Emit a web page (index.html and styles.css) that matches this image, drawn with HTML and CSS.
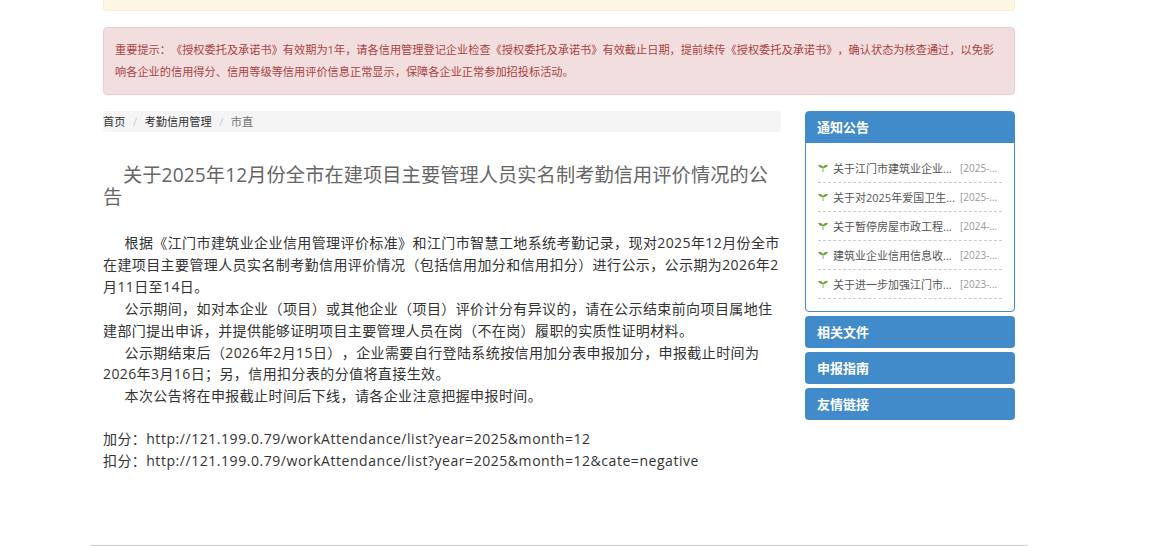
FILE: index.html
```html
<!DOCTYPE html>
<html lang="zh-CN">
<head>
    <meta charset="UTF-8">
    <title>关于2025年12月份全市在建项目主要管理人员实名制考勤信用评价情况的公告</title>
    <link rel="stylesheet" href="styles.css">
</head>
<body>
    <div class="container">
        <div class="alert alert-warning"></div>
        <div class="alert alert-danger">重要提示：《授权委托及承诺书》有效期为1年，请各信用管理登记企业检查《授权委托及承诺书》有效截止日期，提前续传《授权委托及承诺书》，确认状态为核查通过，以免影响各企业的信用得分、信用等级等信用评价信息正常显示，保障各企业正常参加招投标活动。</div>

        <div class="content">
            <div class="main">
                <ol class="breadcrumb">
                    <li><a href="#">首页</a></li>
                    <li><a href="#">考勤信用管理</a></li>
                    <li class="active">市直</li>
                </ol>
                <h3 class="title">关于2025年12月份全市在建项目主要管理人员实名制考勤信用评价情况的公告</h3>
                <div class="article">
                    <p class="indent">根据《江门市建筑业企业信用管理评价标准》和江门市智慧工地系统考勤记录，现对2025年12月份全市在建项目主要管理人员实名制考勤信用评价情况（包括信用加分和信用扣分）进行公示，公示期为2026年2月11日至14日。</p>
                    <p class="indent">公示期间，如对本企业（项目）或其他企业（项目）评价计分有异议的，请在公示结束前向项目属地住建部门提出申诉，并提供能够证明项目主要管理人员在岗（不在岗）履职的实质性证明材料。</p>
                    <p class="indent">公示期结束后（2026年2月15日），企业需要自行登陆系统按信用加分表申报加分，申报截止时间为2026年3月16日；另，信用扣分表的分值将直接生效。</p>
                    <p class="indent">本次公告将在申报截止时间后下线，请各企业注意把握申报时间。</p>
                    <p class="links">加分：<span class="url">http://121.199.0.79/workAttendance/list?year=2025&amp;month=12</span></p>
                    <p>扣分：<span class="url">http://121.199.0.79/workAttendance/list?year=2025&amp;month=12&amp;cate=negative</span></p>
                </div>
            </div>

            <div class="sidebar">
                <div class="panel">
                    <div class="panel-heading">通知公告</div>
                    <ul class="news">
                        <li>
                            <svg class="sprout" viewBox="0 0 10 10"><path d="M5 9V4.500M5 4.500C4 2.500 2 2 .5 2.500 1.500 4.200 3.500 5 5 4.500ZM5 4.500C6 2.500 8 2 9.500 2.500 8.500 4.200 6.500 5 5 4.500Z"/></svg>
                            <a href="#">关于江门市建筑业企业...</a><span class="date">[2025-...</span>
                        </li>
                        <li>
                            <svg class="sprout" viewBox="0 0 10 10"><path d="M5 9V4.500M5 4.500C4 2.500 2 2 .5 2.500 1.500 4.200 3.500 5 5 4.500ZM5 4.500C6 2.500 8 2 9.500 2.500 8.500 4.200 6.500 5 5 4.500Z"/></svg>
                            <a href="#">关于对2025年爱国卫生...</a><span class="date">[2025-...</span>
                        </li>
                        <li>
                            <svg class="sprout" viewBox="0 0 10 10"><path d="M5 9V4.500M5 4.500C4 2.500 2 2 .5 2.500 1.500 4.200 3.500 5 5 4.500ZM5 4.500C6 2.500 8 2 9.500 2.500 8.500 4.200 6.500 5 5 4.500Z"/></svg>
                            <a href="#">关于暂停房屋市政工程...</a><span class="date">[2024-...</span>
                        </li>
                        <li>
                            <svg class="sprout" viewBox="0 0 10 10"><path d="M5 9V4.500M5 4.500C4 2.500 2 2 .5 2.500 1.500 4.200 3.500 5 5 4.500ZM5 4.500C6 2.500 8 2 9.500 2.500 8.500 4.200 6.500 5 5 4.500Z"/></svg>
                            <a href="#">建筑业企业信用信息收...</a><span class="date">[2023-...</span>
                        </li>
                        <li>
                            <svg class="sprout" viewBox="0 0 10 10"><path d="M5 9V4.500M5 4.500C4 2.500 2 2 .5 2.500 1.500 4.200 3.500 5 5 4.500ZM5 4.500C6 2.500 8 2 9.500 2.500 8.500 4.200 6.500 5 5 4.500Z"/></svg>
                            <a href="#">关于进一步加强江门市...</a><span class="date">[2023-...</span>
                        </li>
                    </ul>
                </div>
                <div class="panel-heading closed">相关文件</div>
                <div class="panel-heading closed">申报指南</div>
                <div class="panel-heading closed">友情链接</div>
            </div>
        </div>
        <div class="footer-line"></div>
    </div>
</body>
</html>
```

FILE: styles.css
```css
* {
    box-sizing: border-box;
    margin: 0;
    padding: 0;
}

html, body {
    height: 546px;
    overflow: hidden;
}

body {
    background: #fff;
    color: #333;
    font-family: "Open Sans", "Noto Sans CJK SC", sans-serif;
    font-size: 14px;
    text-spacing-trim: space-all;
}

a {
    color: inherit;
    text-decoration: none;
}

.container {
    width: 936px;
    height: 546px;
    margin-left: 91px;
    padding: 0 12px;
    position: relative;
}

.alert {
    border: 1px solid transparent;
    border-radius: 4px;
}

.alert-warning {
    height: 11px;
    margin-bottom: 16px;
    background: #fcf8e3;
    border-color: #faebcc;
    border-top: none;
    border-radius: 0 0 4px 4px;
}

.alert-danger {
    height: 68px;
    margin-bottom: 16px;
    padding: 10.500px 11px;
    background: #f2dede;
    border-color: #ebccd1;
    color: #a94442;
    font-size: 11.200px;
    line-height: 22px;
}

.content {
    display: flex;
    justify-content: space-between;
}

.main {
    width: 678px;
}

.breadcrumb {
    display: flex;
    height: 21px;
    padding-bottom: 2px;
    align-items: center;
    background: #f5f5f5;
    border-radius: 4px;
    list-style: none;
    font-size: 11.200px;
}

.breadcrumb li + li::before {
    content: "/";
    padding: 0 7.500px;
    color: #ccc;
}

.breadcrumb .active {
    color: #777;
}

.title {
    margin-top: 32px;
    color: #666;
    font-size: 19.200px;
    font-weight: 400;
    line-height: 22px;
    letter-spacing: 0.1px;
    text-indent: 20px;
}

.article {
    margin-top: 24px;
    line-height: 21.900px;
    letter-spacing: 0.4px;
}

.indent {
    text-indent: 21.500px;
}

.links {
    margin-top: 21px;
}

.url {
    letter-spacing: 0.55px;
}

.sidebar {
    width: 210px;
}

.panel {
    border: 1px solid #428bca;
    border-radius: 4px;
    margin-bottom: 4px;
}

.panel-heading {
    height: 31px;
    padding: 0 11px;
    background: #428bca;
    color: #fff;
    font-size: 13px;
    font-weight: 700;
    line-height: 30px;
}

.closed {
    height: 32px;
    margin-bottom: 4px;
    padding: 0 12px;
    border-radius: 4px;
    line-height: 32px;
}

.news {
    height: 168px;
    padding: 11px 12px 0;
    list-style: none;
}

.news li {
    display: flex;
    height: 29px;
    align-items: center;
    border-bottom: 1px dashed #ccc;
    font-size: 11px;
    color: #555;
}

.sprout {
    flex: none;
    width: 10px;
    height: 10px;
    margin-right: 5px;
    fill: #6f9e3c;
    stroke: #6f9e3c;
    stroke-width: 0.8;
}

.news a {
    flex: none;
    width: 127px;
    white-space: nowrap;
}

.date {
    white-space: nowrap;
    color: #999;
    font-size: 10px;
}

.footer-line {
    position: absolute;
    left: 0;
    right: 0;
    top: 545px;
    border-top: 1px solid #ccc;
}
```
